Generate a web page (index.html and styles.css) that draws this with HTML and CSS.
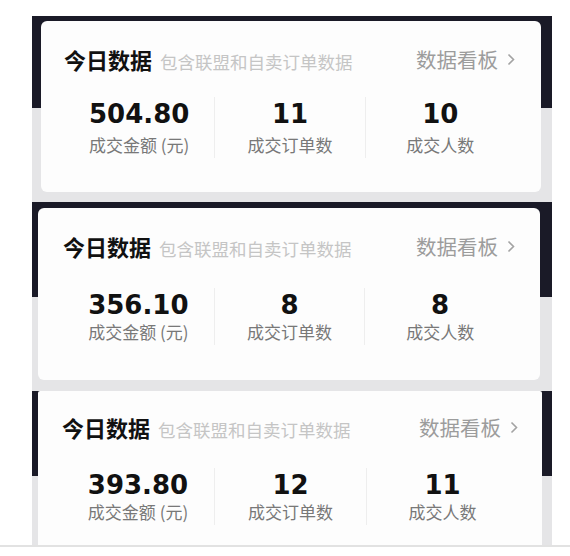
FILE: index.html
```html
<!DOCTYPE html>
<html>
<head>
	<meta charset="UTF-8">
	<title>今日数据</title>
	<link rel="stylesheet" href="styles.css">
</head>
<body>
<div class="page">
	<section class="shot shot-one">
		<div class="card">
			<div class="card-head">
				<div class="head-left">
					<span class="title">今日数据</span>
					<span class="subtitle">包含联盟和自卖订单数据</span>
				</div>
				<a class="board-link" href="#">数据看板<svg class="chevron" width="8" height="13" viewBox="0 0 8 13"><path d="M1.5 1.5 L6.5 6.5 L1.5 11.5" fill="none" stroke="#a3a3a3" stroke-width="1.6"/></svg></a>
			</div>
			<div class="stats">
				<div class="stat"><div class="num">504.80</div><div class="label">成交金额 (元)</div></div>
				<div class="stat"><div class="num">11</div><div class="label">成交订单数</div></div>
				<div class="stat"><div class="num">10</div><div class="label">成交人数</div></div>
			</div>
		</div>
	</section>

	<section class="shot shot-two">
		<div class="card">
			<div class="card-head">
				<div class="head-left">
					<span class="title">今日数据</span>
					<span class="subtitle">包含联盟和自卖订单数据</span>
				</div>
				<a class="board-link" href="#">数据看板<svg class="chevron" width="8" height="13" viewBox="0 0 8 13"><path d="M1.5 1.5 L6.5 6.5 L1.5 11.5" fill="none" stroke="#a3a3a3" stroke-width="1.6"/></svg></a>
			</div>
			<div class="stats">
				<div class="stat"><div class="num">356.10</div><div class="label">成交金额 (元)</div></div>
				<div class="stat"><div class="num">8</div><div class="label">成交订单数</div></div>
				<div class="stat"><div class="num">8</div><div class="label">成交人数</div></div>
			</div>
		</div>
	</section>

	<section class="shot shot-three">
		<div class="card">
			<div class="card-head">
				<div class="head-left">
					<span class="title">今日数据</span>
					<span class="subtitle">包含联盟和自卖订单数据</span>
				</div>
				<a class="board-link" href="#">数据看板<svg class="chevron" width="8" height="13" viewBox="0 0 8 13"><path d="M1.5 1.5 L6.5 6.5 L1.5 11.5" fill="none" stroke="#a3a3a3" stroke-width="1.6"/></svg></a>
			</div>
			<div class="stats">
				<div class="stat"><div class="num">393.80</div><div class="label">成交金额 (元)</div></div>
				<div class="stat"><div class="num">12</div><div class="label">成交订单数</div></div>
				<div class="stat"><div class="num">11</div><div class="label">成交人数</div></div>
			</div>
		</div>
	</section>

	<div class="bottom-line"></div>
</div>
</body>
</html>
```

FILE: styles.css
```css
*{
	box-sizing: border-box;
}
body{
	margin: 0;
	background-color: #ffffff;
	font-family: "Noto Sans CJK SC", "Noto Sans", sans-serif;
}
.page{
	padding-top: 16px;
}

/* each screenshot strip: dark top, grey bottom */
.shot{
	margin-left: 32px;
	width: 520px;
}
.shot-one{
	padding: 5px 11px 10px 9px;
	background: linear-gradient(to bottom, #1a1a27 0, #1a1a27 92px, #e5e5e7 92px);
}
.shot-two{
	padding: 6px 12px 11px 6px;
	background: linear-gradient(to bottom, #1a1a27 0, #1a1a27 95px, #e5e5e7 95px);
}
.shot-three{
	padding: 0 10px 0 6px;
	height: 154px;
	overflow: hidden;
	background: linear-gradient(to bottom, #1a1a27 0, #1a1a27 85px, #e5e5e7 85px);
}

.card{
	background-color: #fdfdfd;
	border-radius: 6px;
	padding: 24px 26px 34px 23px;
}
.shot-two .card{
	padding: 24px 25px 35px 25px;
}
.shot-three .card{
	border-radius: 2px;
	padding: 22px 24px 32px 24px;
}

.card-head{
	display: flex;
	justify-content: space-between;
	align-items: center;
	height: 28px;
}
.head-left{
	display: flex;
	align-items: baseline;
	gap: 8px;
}
.title{
	font-size: 22px;
	font-weight: bold;
	color: #111111;
	line-height: 28px;
}
.subtitle{
	font-size: 17.5px;
	color: #c5c5c5;
}
.board-link{
	display: flex;
	align-items: center;
	font-size: 20.5px;
	color: #9c9c9c;
	text-decoration: none;
	line-height: 28px;
}
.chevron{
	margin-left: 9px;
}

.stats{
	display: grid;
	grid-template-columns: 1fr 1fr 1fr;
	margin-top: 24px;
}
.shot-two .stats{
	margin-top: 28px;
}
.shot-three .stats{
	margin-top: 27px;
}
.stat{
	text-align: center;
}
.stat + .stat{
	border-left: 1px solid #eeeeee;
}
.num{
	font-family: "DejaVu Sans", sans-serif;
	font-weight: bold;
	font-size: 26px;
	line-height: 34px;
	color: #111111;
}
.label{
	margin-top: 1px;
	font-size: 17px;
	line-height: 26px;
	color: #787878;
}
.shot-two .label,
.shot-three .label{
	margin-top: -3px;
}

.bottom-line{
	height: 2px;
	background-color: #e2e2e2;
}
```
